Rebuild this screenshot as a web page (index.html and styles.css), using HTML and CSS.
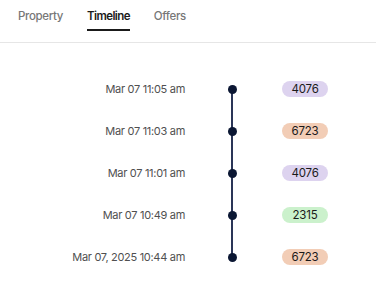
FILE: index.html
```html
<!DOCTYPE html>
<html lang="en">
<head>
    <meta charset="UTF-8">
    <meta name="viewport" content="width=device-width, initial-scale=1.0">
    <title>Timeline</title>
    <link rel="stylesheet" href="styles.css">
</head>
<body>
    <nav class="tabs">
        <a class="tab">Property</a>
        <a class="tab active">Timeline</a>
        <a class="tab">Offers</a>
    </nav>

    <ul class="timeline">
        <li class="event">
            <span class="date">Mar 07 11:05 am</span>
            <span class="marker"><span class="dot"></span></span>
            <span class="badge purple">4076</span>
        </li>
        <li class="event">
            <span class="date">Mar 07 11:03 am</span>
            <span class="marker"><span class="dot"></span></span>
            <span class="badge orange">6723</span>
        </li>
        <li class="event">
            <span class="date">Mar 07 11:01 am</span>
            <span class="marker"><span class="dot"></span></span>
            <span class="badge purple">4076</span>
        </li>
        <li class="event">
            <span class="date">Mar 07 10:49 am</span>
            <span class="marker"><span class="dot"></span></span>
            <span class="badge green">2315</span>
        </li>
        <li class="event">
            <span class="date">Mar 07, 2025 10:44 am</span>
            <span class="marker"><span class="dot"></span></span>
            <span class="badge orange">6723</span>
        </li>
    </ul>
</body>
</html>
```

FILE: styles.css
```css
body {
    font-family: Inter, "Noto Sans", sans-serif;
    background-color: #fff;
    margin: 0;
    padding: 0;
    color: #1a1a1a;
}
.tabs {
    display: flex;
    gap: 24px;
    padding: 0 18px;
    height: 42px;
    border-bottom: 1px solid #e6e6e6;
}
.tab {
    display: flex;
    align-items: center;
    height: 31px;
    padding-top: 3px;
    font-size: 11.5px;
    letter-spacing: -0.35px;
    font-weight: 500;
    color: #777;
    border-bottom: 2px solid transparent;
    box-sizing: border-box;
}
.tab.active {
    color: #1a1a1a;
    font-weight: 600;
    letter-spacing: -0.6px;
    border-bottom-color: #1a1a1a;
}
.timeline {
    list-style: none;
    margin: 0;
    padding: 25px 0 0;
}
.event {
    display: grid;
    grid-template-columns: 185px 94px 3px auto;
    align-items: center;
    height: 42px;
}
.date {
    text-align: right;
    font-size: 11px;
    letter-spacing: -0.3px;
    color: #505050;
}
.marker {
    position: relative;
    align-self: stretch;
    display: flex;
    align-items: center;
    justify-content: center;
}
.marker::before {
    content: "";
    position: absolute;
    left: 46px;
    width: 2px;
    top: 0;
    bottom: 0;
    background-color: #2a3557;
}
.event:first-child .marker::before {
    top: 50%;
}
.event:last-child .marker::before {
    bottom: 50%;
}
.dot {
    position: relative;
    width: 9px;
    height: 9px;
    border-radius: 50%;
    background-color: #0b1733;
}
.badge {
    grid-column: 4;
    width: 46px;
    height: 16px;
    line-height: 16px;
    text-align: center;
    border-radius: 8px;
    font-size: 11.5px;
    letter-spacing: -0.2px;
    color: #1a1a1a;
}
.purple {
    background-color: #ddd3ef;
}
.orange {
    background-color: #f2cdb6;
}
.green {
    background-color: #cbf1cc;
}
```
